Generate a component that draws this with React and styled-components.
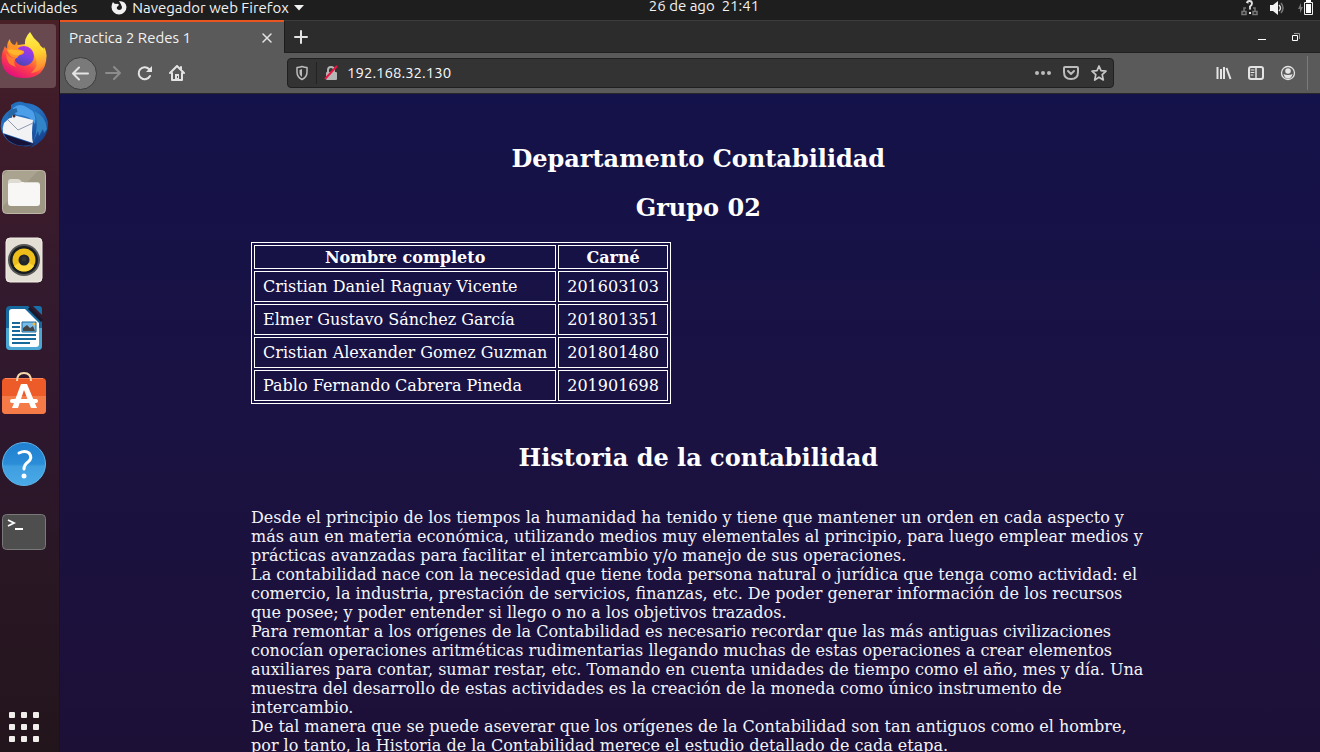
import React from "react";
import styled, { createGlobalStyle } from "styled-components";

const uiFont = `Ubuntu, "Noto Sans", "Open Sans", sans-serif`;
const serifFont = `"DejaVu Serif", "Liberation Serif", serif`;

const GlobalStyle = createGlobalStyle`
  *, *::before, *::after { box-sizing: border-box; }
  body { margin: 0; overflow: hidden; background: #1e1e1e; }
  button { font: inherit; color: inherit; border: 0; padding: 0; background: none; cursor: pointer; }
  svg { display: block; flex: none; }
`;

const Desktop = styled.div`
  display: grid;
  grid-template: 20px minmax(0, 1fr) / 60px minmax(0, 1fr);
  height: 100vh;
  overflow: hidden;
  font-family: ${uiFont};
  font-size: 15px;
  line-height: 16px;
  color: #f2f2f2;
`;

const TopBar = styled.header`
  grid-column: 1 / -1;
  display: grid;
  grid-template-columns: 1fr auto 1fr;
  background: #1e1e1e;
  padding-bottom: 8px;
`;

const BarGroup = styled.div`
  display: flex;
  align-items: center;
  gap: ${(p) => p.$gap || 0}px;
  justify-content: ${(p) => (p.$end ? "flex-end" : "flex-start")};
  padding-right: ${(p) => (p.$end ? 7 : 0)}px;
`;

const BarButton = styled.button`
  display: flex;
  align-items: center;
  gap: 5px;
  line-height: 12px;
  white-space: nowrap;
`;

const Clock = styled.time`
  line-height: 12px;
  padding-left: 88px;
  white-space: pre;
`;

const Dock = styled.nav`
  display: flex;
  flex-direction: column;
  gap: 4px;
  padding: 4px 3px 7px 0;
  border-right: 1px solid #1c1219;
  background: linear-gradient(#4a2027 0, #411c29 9%, #341a2d 36%, #2e172e 55%, #291724 75%, #23151c 100%);
`;

const DockItem = styled.button`
  display: grid;
  place-items: center start;
  width: 56px;
  height: 64px;
  border-radius: 0 4px 4px 0;
  background: ${(p) => (p.$active ? "#68494f" : "transparent")};
`;

const AppsButton = styled(DockItem)`
  margin-top: auto;
  height: 36px;
`;

const Browser = styled.section`
  display: flex;
  flex-direction: column;
  min-width: 0;
  min-height: 0;
`;

const TabStrip = styled.div`
  display: flex;
  height: 33px;
  flex: none;
  background: #2c2c2c;
  border-top: 1px solid #3c3c3c;
  border-bottom: 1px solid #202020;
`;

const Tab = styled.div`
  display: flex;
  align-items: center;
  justify-content: space-between;
  width: 224px;
  padding: 0 11px 0 9px;
  background: #5a5a5a;
  border-top: 2px solid #e95420;
  margin: -1px 0;
`;

const NewTab = styled.button`
  display: grid;
  place-items: center;
  width: 33px;
  border-left: 1px solid #1c1c1c;
`;

const WindowControls = styled.div`
  display: flex;
  align-items: center;
  gap: 26px;
  margin-left: auto;
  padding-right: 20px;
`;

const Toolbar = styled.div`
  display: flex;
  align-items: center;
  height: 41px;
  flex: none;
  padding-left: 4px;
  background: #5a5a5a;
  border-bottom: 1px solid #282828;
`;

const NavButtons = styled.div`
  display: flex;
  align-items: center;
  gap: 16px;
  flex: none;
  width: 223px;
`;

const IconButton = styled.button`
  display: grid;
  place-items: center;
  flex: none;
`;

const BackButton = styled(IconButton)`
  width: 33px;
  height: 33px;
  margin-right: -8px;
  border-radius: 50%;
  background: #7a7a7a;
  border: 1px solid #3d3d3d;
`;

const AddressBar = styled.form`
  display: flex;
  align-items: center;
  flex: 1;
  height: 30px;
  padding: 0 6px;
  gap: 12px;
  background: #333;
  border: 1px solid #202020;
  border-radius: 4px;
`;

const SiteIdentity = styled.div`
  display: flex;
  align-items: center;
  gap: 6px;
  align-self: stretch;
`;

const Separator = styled.span`
  width: 1px;
  height: 22px;
  background: ${(p) => p.$color};
`;

const AddressInput = styled.input`
  flex: 1;
  min-width: 0;
  margin-left: -4px;
  padding: 0;
  border: 0;
  outline: 0;
  background: none;
  color: #f9f9fa;
  font: 15px/20px ${uiFont};
`;

const ToolButtons = styled.div`
  display: flex;
  align-items: center;
  gap: 16px;
  margin-left: 102px;
  padding-right: 11px;
  margin-right: 12px;
  height: 34px;
  border-right: 1px solid #7b7b7b;
`;

const Viewport = styled.main`
  flex: 1;
  min-height: 0;
  overflow-y: auto;
  scrollbar-width: none;
  background: linear-gradient(#14124a, #1a1242 50%, #1d1037);
  color: #fff;
  font-family: ${serifFont};
  font-size: 16px;
  line-height: 19px;
`;

const Article = styled.article`
  width: 71%;
  margin-left: 191px;
  padding-top: 30px;
`;

const Heading = styled.h2`
  margin: 21px 0 20px;
  font-size: 24px;
  line-height: 28px;
  text-align: center;
`;

const SectionHeading = styled(Heading)`
  margin: 40px 0 36px;
`;

const Members = styled.table`
  border: 1px solid #fff;
  border-spacing: 2px;
`;

const HeadCell = styled.th`
  padding: 2px 2px 1px;
  border: 1px solid #fff;
`;

const Cell = styled.td`
  padding: 5px 8px;
  border: 1px solid #fff;
`;

const Paragraph = styled.p`
  margin: 0;
  color: #f2f4fa;
`;

const line = { fill: "none", stroke: "#e4e4e4", strokeWidth: 2, strokeLinecap: "round", strokeLinejoin: "round" };

const FirefoxMark = () => (
  <svg width="16" height="16" viewBox="0 0 16 16">
    <path fill="#f2f2f2" d="M2 2 Q3 4 5 4 Q7 3 8 5 L6 7 Q5 9 8 10 Q11 10 11 7 Q10 4 8 1 Q15 1 15.500 7 A7.500 7.500 0 1 1 .5 7 Q.5 4 2 2Z" />
  </svg>
);
const Caret = () => <svg width="10" height="6" viewBox="0 0 10 6"><path d="M0 0h10L5 5.500z" fill="#f2f2f2" /></svg>;
const NetworkIcon = () => (
  <svg width="17" height="16" viewBox="0 0 17 16">
    <path d="M1 11.500h4v3H1zM12 11.500h4v3h-4zM3 11V8h2M14 11V8h-2M6 3h2" fill="none" stroke="#777" strokeWidth="1.500" />
    <path d="M6 3Q6 1 8.500 1Q11 1 11 3.500Q11 5 9 6.500V9.500" fill="none" stroke="#e4e4e4" strokeWidth="1.800" />
    <path d="M8 12h2v2H8z" fill="#eee" />
  </svg>
);
const VolumeIcon = () => (
  <svg width="15" height="16" viewBox="0 0 15 16">
    <path d="M0 5h3l5-4v14l-5-4H0z" fill="#f2f2f2" />
    <path d="M9 5q3 3 0 6" fill="none" stroke="#ddd" strokeWidth="1.500" />
    <path d="M11 3q4 5 0 10" fill="none" stroke="#777" strokeWidth="1.500" />
  </svg>
);
const BatteryIcon = () => (
  <svg width="16" height="16" viewBox="0 0 16 16">
    <path d="M4 3L1 9h2v4l3-6H4z" fill="#777" />
    <path d="M7.500 2.500h8v12h-8z" fill="none" stroke="#eee" /><path d="M9 4h5v9H9zM9 0h5v2H9z" fill="#fff" />
  </svg>
);

const FirefoxLogo = () => (
  <svg width="48" height="48" viewBox="0 2 48 48">
    <defs>
      <linearGradient id="ffBody" x1=".8" y1=".1" x2=".25" y2=".95"><stop stopColor="#fff44f" /><stop offset=".35" stopColor="#ff9a26" /><stop offset=".65" stopColor="#ff4048" /><stop offset="1" stopColor="#e3107d" /></linearGradient>
      <linearGradient id="ffTail" x1=".5" y1="0" x2=".6" y2="1"><stop stopColor="#fff24c" /><stop offset=".5" stopColor="#ffd02f" /><stop offset="1" stopColor="#ff7838" /></linearGradient>
      <linearGradient id="ffGlobe" x1=".7" y1="0" x2=".3" y2="1"><stop stopColor="#b833e1" /><stop offset=".5" stopColor="#7542e5" /><stop offset="1" stopColor="#4b45aa" /></linearGradient>
    </defs>
    <path fill="url(#ffBody)" d="M10 9Q10 13 14 15L18 15Q24 14 30 14L39 15Q46 19 46.500 26Q46 48 24 48Q2 48 1.500 28Q2 21 5 16Q6 19 7 18Q7 12 10 9Z" />
    <path fill="url(#ffTail)" d="M30 2Q33 8 39 13Q42 17 42 22L44 17Q47 21 46 28Q43 42 31 43Q40 36 35 27Q33 20 25 16Q24 8 30 2Z" />
    <circle cx="24" cy="26" r="10" fill="url(#ffGlobe)" />
    <path fill="#ff9426" d="M7 20Q10 14 15 15L17 11L18 17Q16 19 24 21Q25 24 20 25Q18 26 17 28Q10 29 7 20Z" />
    <path fill="#ffb52c" d="M7 20Q12 19 15 20Q18 20 23 21Q22 24 18 25Q12 26 7 20Z" />
    <path fill="#ff7b30" d="M6 23Q12 30 17 27Q12 32 16 37Q6 35 6 23Z" />
  </svg>
);

const ThunderbirdLogo = () => (
  <svg width="48" height="48" viewBox="0 0 48 48">
    <defs><linearGradient id="tbBlue" x1="0" y1="0" x2=".8" y2="1"><stop stopColor="#1d6bb8" /><stop offset=".45" stopColor="#2873c4" /><stop offset="1" stopColor="#133c87" /></linearGradient></defs>
    <path fill="url(#tbBlue)" d="M11 5Q18-1 25 3Q43 4 48 22Q49 40 30 48L36 42Q28 48 24 46Q6 46 1 29Q-1 17 11 9Z" />
    <path fill="#4c9ee8" d="M13 8Q20 2 28 8Q37 12 35 24Q30 15 17 15Q13 12 13 8Z" />
    <path fill="#f2f2f4" d="M4 23L13 15L33 20Q31 35 33 43L3 33Q2 28 4 23Z" />
    <path d="M8 20L18 30L33 23" fill="none" stroke="#8f9aad" strokeWidth="1" />
    <path fill="#171237" d="M4 34L33 44Q20 48 11 42Q6 39 4 34Z" />
    <path fill="#3184c6" d="M34 11Q46 16 47 29L44 33L43 29L39 36L38 31L33 42Q40 26 34 11Z" />
    <path d="M10 18Q9 12 17 10" stroke="#2467a4" strokeWidth="4" fill="none" /><circle cx="14" cy="16" r="1.500" fill="#472b35" />
  </svg>
);

const FilesLogo = () => (
  <svg width="48" height="48" viewBox="0 0 48 48">
    <rect x="2.500" y="2.500" width="43" height="43" rx="4" fill="#9e9784" stroke="#bdb7a5" />
    <path d="M8 3H38L3 38V7z" fill="#aaa390" />
    <path d="M8 14q0-3 3-3h7q2 0 4 3h15q3 0 3 3v7H8z" fill="#dedbd3" />
    <rect x="8" y="15" width="32" height="23" rx="3" fill="#f8f7f5" /><path d="M8 18q0-3 3-3h8q2-1 5-1v5z" fill="#f8f7f5" />
  </svg>
);

const MusicLogo = () => (
  <svg width="48" height="48" viewBox="0 0 48 48">
    <rect x="6" y="2" width="36" height="44" rx="4" fill="#e4dfd4" stroke="#f2eee7" />
    <circle cx="24" cy="24" r="16" fill="#555" /><circle cx="24" cy="24" r="14" fill="#171c20" />
    <circle cx="24" cy="24" r="11.500" fill="#edbd19" /><path d="M24 24L14 30a12 12 0 0 0 20 0z" fill="#ffd83c" />
    <circle cx="24" cy="24" r="5.500" fill="#20242b" /><circle cx="24" cy="23" r="2.500" fill="#333" />
  </svg>
);

const WriterLogo = () => (
  <svg width="48" height="48" viewBox="0 0 48 48">
    <path fill="#16699f" d="M10 2H28L42 16V42q0 4-4 4H10q-4 0-4-4V6q0-4 4-4Z" />
    <path d="M6 24H42V42q0 4-4 4H10q-4 0-4-4Z" fill="#4aa7d3" />
    <path d="M12 5H25L39 19V40q0 3-3 3H12q-3 0-3-3V8q0-3 3-3Z" fill="#fff" />
    <path d="M33 2H39Q42 2 42 5V11z" fill="#1770a9" /><path d="M29 4L42 17" stroke="#18172b" strokeWidth="3" />
    <path d="M12 19h8M12 23h8M12 27h8M12 31h24M12 35h24M12 39h18" stroke="#17699a" strokeWidth="2" />
    <path d="M22 18H36V28H22z" fill="#78bdea" stroke="#17699a" /><path d="M23 27V24L27 21L30 24L33 22L35 27z" fill="#454545" /><circle cx="34" cy="20" r="1.500" fill="#f7b737" />
  </svg>
);

const SoftwareLogo = () => (
  <svg width="48" height="48" viewBox="0 4 48 48">
    <rect x="2" y="10" width="44" height="36" rx="4" fill="#ed5b28" />
    <path d="M2 28H46V42q0 4-4 4H6q-4 0-4-4z" fill="#f47b47" /><path d="M5 10.500H43" stroke="#ff8459" />
    <path d="M17 13Q17 5 24 5Q31 5 31 13" fill="none" stroke="#f6d9ac" strokeWidth="2" />
    <path d="M21 16h6l10 24h-6L24 22l-6 18h-6z" fill="#fff" /><path d="M12 33h24" stroke="#fff" strokeWidth="4" strokeLinecap="round" />
  </svg>
);

const HelpLogo = () => (
  <svg width="48" height="48" viewBox="0 0 48 48">
    <defs><linearGradient id="helpBlue" x1="0" y1="0" x2="0" y2="1"><stop stopColor="#1f80d0" /><stop offset=".5" stopColor="#2b8cd8" /><stop offset=".55" stopColor="#3f9ee0" /><stop offset="1" stopColor="#4aaae6" /></linearGradient></defs>
    <circle cx="24" cy="24" r="21.500" fill="url(#helpBlue)" stroke="#5eb5ec" />
    <path d="M19 13Q25 10 29 13Q33 18 28 22Q24 25 24 29" fill="none" stroke="#fff" strokeWidth="3" strokeLinecap="round" /><circle cx="24" cy="36" r="2.500" fill="#fff" />
  </svg>
);

const TerminalLogo = () => (
  <svg width="48" height="48" viewBox="0 0 48 48">
    <rect x="2.500" y="6.500" width="43" height="35" rx="4" fill="#4e4e4e" stroke="#797979" />
    <path d="M8 12l6 3-6 3M15 21h8" fill="none" stroke="#fff" strokeWidth="1.800" />
  </svg>
);

const AppsGrid = () => (
  <svg width="48" height="36" viewBox="0 0 48 36" fill="#f0efec">
    {[0, 12, 24].map((y) => [9, 21, 33].map((x) => <rect key={`${x}-${y}`} x={x} y={y + 3} width="6" height="6" rx="1" />))}
  </svg>
);

const CloseIcon = () => <svg width="12" height="12" viewBox="0 0 12 12"><path d="M2 2l8 8M10 2l-8 8" {...line} strokeWidth="1.500" /></svg>;
const PlusIcon = () => <svg width="16" height="16" viewBox="0 0 16 16"><path d="M8 2v12M2 8h12" {...line} /></svg>;
const BackIcon = () => <svg width="17" height="17" viewBox="0 0 17 17"><path d="M16 8.500H1M7 2.500l-6 6 6 6" {...line} /></svg>;
const ForwardIcon = () => <svg width="16" height="16" viewBox="0 0 16 16"><path d="M1 8h14M9 2l6 6-6 6" {...line} stroke="#8c8c8c" /></svg>;
const ReloadIcon = () => (
  <svg width="16" height="16" viewBox="0 0 16 16"><path d="M13 11A6 6 0 1 1 12 4" {...line} /><path d="M15 1v6H9z" fill="#e4e4e4" /></svg>
);
const HomeIcon = () => (
  <svg width="16" height="16" viewBox="0 0 16 16"><path d="M1 8L8 1l7 7M3 8v7h10V8M12 2v3" {...line} /><path d="M6 9h4v5H6z" fill="#e4e4e4" /><path d="M8 11h1v2H8z" fill="#555" /></svg>
);
const ShieldIcon = () => (
  <svg width="16" height="16" viewBox="0 0 16 16"><path d="M8 1.500q3 1 5 1V7q0 5-5 7.500Q3 12 3 7V2.500q2 0 5-1Z" {...line} stroke="#bcbcbc" strokeWidth="1.500" /><path d="M8 4L5.500 5v3q0 2.500 2.500 4z" fill="#bcbcbc" /></svg>
);
const InsecureIcon = () => (
  <svg width="16" height="16" viewBox="0 0 16 16"><path d="M5 7V5q0-3 3-3t3 3v2" {...line} stroke="#b5b5b5" /><rect x="3" y="7" width="11" height="8" rx="1" fill="#b5b5b5" /><path d="M2 14L14 1" stroke="#e91642" strokeWidth="2" /></svg>
);
const DotsIcon = () => <svg width="16" height="16" viewBox="0 0 16 16" fill="#bcbcbc"><circle cx="2" cy="8" r="2" /><circle cx="8" cy="8" r="2" /><circle cx="14" cy="8" r="2" /></svg>;
const PocketIcon = () => <svg width="16" height="16" viewBox="0 0 16 16"><path d="M2 2h12q1 0 1 1v4q0 7-7 7T1 7V3q0-1 1-1ZM5 6l3 3 3-3" {...line} stroke="#bcbcbc" /></svg>;
const StarIcon = () => <svg width="16" height="16" viewBox="0 0 16 16"><path d="M8 1l2 4.700 5 .5-3.800 3.400L12.300 15 8 12.200 3.700 15l1.100-5.400L1 6.200l5-.5Z" {...line} stroke="#c8c8c8" strokeWidth="1.700" /></svg>;
const LibraryIcon = () => <svg width="16" height="16" viewBox="0 0 16 16"><path d="M1.500 2v12M5 4v10M8 2v12M10.500 3l4 11" {...line} strokeLinecap="butt" /></svg>;
const SidebarIcon = () => <svg width="16" height="16" viewBox="0 0 16 16"><rect x="1" y="2" width="14" height="12" rx="2" {...line} /><path d="M8 2v12" {...line} strokeWidth="1.500" /><path d="M3 5h3M3 7.500h3M3 10h2" {...line} strokeWidth="1" /></svg>;
const AccountIcon = () => <svg width="16" height="16" viewBox="0 0 16 16"><circle cx="8" cy="8" r="6.500" {...line} strokeWidth="1.300" /><circle cx="8" cy="6" r="2.800" fill="#e4e4e4" /><path d="M3.500 9q4.500 2 9 0-1 4.500-4.500 4.500T3.500 9z" fill="#e4e4e4" /></svg>;
const MinimizeIcon = () => <svg width="8" height="10" viewBox="0 0 8 10"><path d="M0 7h8v1H0z" fill="#fff" /></svg>;
const RestoreIcon = () => <svg width="8" height="8" viewBox="0 0 8 8"><path d="M2 .5h5.500V6" fill="none" stroke="#999" /><path d="M.5 2.500h5v5h-5z" fill="none" stroke="#fff" /></svg>;

const dockApps = [
  ["Firefox", FirefoxLogo], ["Thunderbird", ThunderbirdLogo], ["Archivos", FilesLogo], ["Rhythmbox", MusicLogo],
  ["LibreOffice Writer", WriterLogo], ["Software de Ubuntu", SoftwareLogo], ["Ayuda", HelpLogo], ["Terminal", TerminalLogo],
];

const members = [
  ["Cristian Daniel Raguay Vicente", "201603103"],
  ["Elmer Gustavo Sánchez García", "201801351"],
  ["Cristian Alexander Gomez Guzman", "201801480"],
  ["Pablo Fernando Cabrera Pineda", "201901698"],
];

const history = [
  "Desde el principio de los tiempos la humanidad ha tenido y tiene que mantener un orden en cada aspecto y más aun en materia económica, utilizando medios muy elementales al principio, para luego emplear medios y prácticas avanzadas para facilitar el intercambio y/o manejo de sus operaciones.",
  "La contabilidad nace con la necesidad que tiene toda persona natural o jurídica que tenga como actividad: el comercio, la industria, prestación de servicios, finanzas, etc. De poder generar información de los recursos que posee; y poder entender si llego o no a los objetivos trazados.",
  "Para remontar a los orígenes de la Contabilidad es necesario recordar que las más antiguas civilizaciones conocían operaciones aritméticas rudimentarias llegando muchas de estas operaciones a crear elementos auxiliares para contar, sumar restar, etc. Tomando en cuenta unidades de tiempo como el año, mes y día. Una muestra del desarrollo de estas actividades es la creación de la moneda como único instrumento de intercambio.",
  "De tal manera que se puede aseverar que los orígenes de la Contabilidad son tan antiguos como el hombre, por lo tanto, la Historia de la Contabilidad merece el estudio detallado de cada etapa.",
];

export default function App() {
  return (
    <>
      <GlobalStyle />
      <Desktop>
        <TopBar>
          <BarGroup $gap={34}>
            <BarButton>Actividades</BarButton>
            <BarButton><FirefoxMark />Navegador web Firefox<Caret /></BarButton>
          </BarGroup>
          <Clock>{"26 de ago  21:41"}</Clock>
          <BarGroup $end $gap={12}><NetworkIcon /><VolumeIcon /><BatteryIcon /></BarGroup>
        </TopBar>

        <Dock aria-label="Aplicaciones">
          {dockApps.map(([name, Logo], i) => (
            <DockItem key={name} aria-label={name} $active={i === 0}><Logo /></DockItem>
          ))}
          <AppsButton aria-label="Mostrar aplicaciones"><AppsGrid /></AppsButton>
        </Dock>

        <Browser>
          <TabStrip>
            <Tab>Practica 2 Redes 1<IconButton aria-label="Cerrar pestaña"><CloseIcon /></IconButton></Tab>
            <NewTab aria-label="Nueva pestaña"><PlusIcon /></NewTab>
            <WindowControls>
              <IconButton aria-label="Minimizar"><MinimizeIcon /></IconButton>
              <IconButton aria-label="Restaurar"><RestoreIcon /></IconButton>
            </WindowControls>
          </TabStrip>
          <Toolbar>
            <NavButtons>
              <BackButton aria-label="Atrás"><BackIcon /></BackButton>
              <IconButton aria-label="Adelante"><ForwardIcon /></IconButton>
              <IconButton aria-label="Recargar"><ReloadIcon /></IconButton>
              <IconButton aria-label="Inicio"><HomeIcon /></IconButton>
            </NavButtons>
            <AddressBar onSubmit={(e) => e.preventDefault()}>
              <SiteIdentity><ShieldIcon /><Separator $color="#222" /><InsecureIcon /></SiteIdentity>
              <AddressInput aria-label="Dirección" defaultValue="192.168.32.130" />
              <IconButton type="button" aria-label="Acciones de página"><DotsIcon /></IconButton>
              <IconButton type="button" aria-label="Guardar en Pocket"><PocketIcon /></IconButton>
              <IconButton type="button" aria-label="Marcador"><StarIcon /></IconButton>
            </AddressBar>
            <ToolButtons>
              <IconButton aria-label="Biblioteca"><LibraryIcon /></IconButton>
              <IconButton aria-label="Barra lateral"><SidebarIcon /></IconButton>
              <IconButton aria-label="Cuenta"><AccountIcon /></IconButton>
            </ToolButtons>
          </Toolbar>
          <Viewport>
            <Article>
              <Heading>Departamento Contabilidad</Heading>
              <Heading>Grupo 02</Heading>
              <Members>
                <thead><tr><HeadCell>Nombre completo</HeadCell><HeadCell>Carné</HeadCell></tr></thead>
                <tbody>
                  {members.map(([name, id]) => <tr key={id}><Cell>{name}</Cell><Cell>{id}</Cell></tr>)}
                </tbody>
              </Members>
              <SectionHeading>Historia de la contabilidad</SectionHeading>
              {history.map((text) => <Paragraph key={text}>{text}</Paragraph>)}
            </Article>
          </Viewport>
        </Browser>
      </Desktop>
    </>
  );
}
